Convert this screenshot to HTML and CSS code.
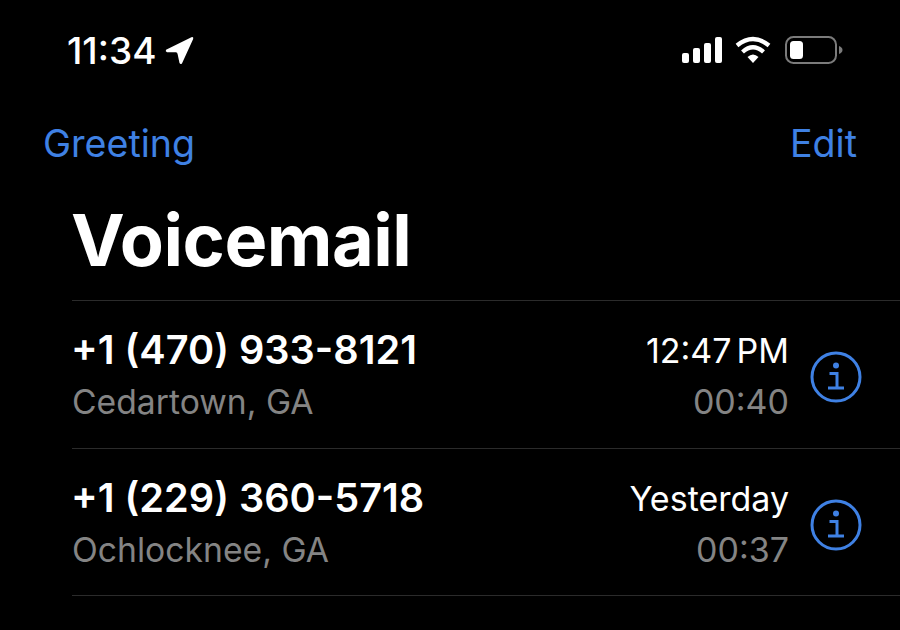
FILE: index.html
```html
<!DOCTYPE html>
<html lang="en">
<head>
<meta charset="utf-8">
<title>Voicemail</title>
<link rel="stylesheet" href="styles.css">
</head>
<body>
<div class="screen">
  <div class="status">
    <div class="status-left">
      <span class="clock">11:34</span>
      <svg class="loc" width="29" height="29" viewBox="0 0 28 28"><path d="M1 13.200 L25.500 1.200 Q27.800 0.500 27.200 3 L16.500 26.200 Q15 28 14 26 L12.200 17.500 Q12 16 10.500 15.800 L2 15.800 Q0 15 1 13.200 Z" fill="#fff"/></svg>
    </div>
    <div class="status-right">
      <svg class="signal" width="41" height="26" viewBox="0 0 41 26"><rect x="0" y="16" width="7" height="10" rx="2" fill="#fff"/><rect x="11" y="11" width="7" height="15" rx="2" fill="#fff"/><rect x="22" y="6" width="7" height="20" rx="2" fill="#fff"/><rect x="33" y="0" width="7" height="26" rx="2" fill="#fff"/></svg>
      <svg class="wifi" width="36" height="28" viewBox="0 0 36 28"><path d="M18 27 L12.500 21 Q18 16 23.500 21 Z" fill="#fff"/><path d="M7.500 16 Q18 6.500 28.500 16" fill="none" stroke="#fff" stroke-width="4.300"/><path d="M2 9.500 Q18 -3.500 34 9.500" fill="none" stroke="#fff" stroke-width="4.300"/></svg>
      <svg class="battery" width="58" height="28" viewBox="0 0 58 28"><rect x="1" y="1" width="50" height="26" rx="7.500" fill="none" stroke="#7b7b7b" stroke-width="2"/><rect x="5" y="5" width="13" height="18" rx="3.500" fill="#fff"/><path d="M54 10 Q57.500 11.500 57.500 14 Q57.500 16.500 54 18 Z" fill="#7b7b7b"/></svg>
    </div>
  </div>
  <div class="nav">
    <span class="link">Greeting</span>
    <span class="link">Edit</span>
  </div>
  <h1 class="title">Voicemail</h1>
  <ul class="list">
    <li class="row">
      <div class="who">
        <span class="number">+1 (470) 933-8121</span>
        <span class="place">Cedartown, GA</span>
      </div>
      <div class="when">
        <span class="time">12:47<span class="ampm">PM</span></span>
        <span class="dur">00:40</span>
      </div>
      <svg class="info" width="52" height="52" viewBox="0 0 52 52"><circle cx="26" cy="26" r="24" fill="none" stroke="#3f81e4" stroke-width="3"/><circle cx="26" cy="14.500" r="3" fill="#3f81e4"/><path d="M19.500 22.500 H27 V36.500 M18 37 H34" fill="none" stroke="#3f81e4" stroke-width="3"/></svg>
    </li>
    <li class="row">
      <div class="who">
        <span class="number">+1 (229) 360-5718</span>
        <span class="place">Ochlocknee, GA</span>
      </div>
      <div class="when">
        <span class="time">Yesterday</span>
        <span class="dur">00:37</span>
      </div>
      <svg class="info" width="52" height="52" viewBox="0 0 52 52"><circle cx="26" cy="26" r="24" fill="none" stroke="#3f81e4" stroke-width="3"/><circle cx="26" cy="14.500" r="3" fill="#3f81e4"/><path d="M19.500 22.500 H27 V36.500 M18 37 H34" fill="none" stroke="#3f81e4" stroke-width="3"/></svg>
    </li>
  </ul>
</div>
</body>
</html>
```

FILE: styles.css
```css
* { box-sizing: border-box; }
html, body { margin: 0; padding: 0; background: #000; }
body { font-family: Inter, "Liberation Sans", sans-serif; color: #fff; }
.screen { width: 900px; height: 630px; overflow: hidden; background: #000; display: flex; flex-direction: column; }
.status { height: 78px; padding: 22px 57px 0 67px; display: flex; justify-content: space-between; align-items: center; }
.status-left { display: flex; align-items: center; gap: 9px; }
.clock { font-size: 37px; font-weight: 500; line-height: 44px; margin-top: 2px; }
.loc { display: block; }
.status-right { display: flex; align-items: center; gap: 14px; }
.status-right svg { display: block; }
.signal { margin-right: -2px; }
.nav { margin-top: 42px; height: 48px; padding: 0 43px; display: flex; justify-content: space-between; align-items: center; }
.link { font-size: 37.600px; line-height: 48px; color: #3f81e4; }
.title { margin: 34px 0 0 71px; font-size: 72px; line-height: 76px; font-weight: 700; letter-spacing: -0.500px; height: 76px; }
.list { list-style: none; margin: 22px 0 0 72px; padding: 0; border-top: 1px solid #2b2b2b; }
.row { height: 147.500px; border-bottom: 1px solid #2b2b2b; display: flex; align-items: center; padding-right: 38px; }
.who { flex: 1; display: flex; flex-direction: column; padding-top: 4px; }
.number { font-size: 39.700px; line-height: 52px; font-weight: 600; margin-left: -1px; }
.place { font-size: 33.700px; line-height: 52px; color: #848484; }
.when { display: flex; flex-direction: column; align-items: flex-end; margin-right: 21px; padding-top: 6px; }
.time { font-size: 34px; line-height: 50px; }
.ampm { margin-left: 5px; }
.dur { font-size: 34px; line-height: 52px; color: #848484; }
.info { display: block; margin-top: 6px; }
```
